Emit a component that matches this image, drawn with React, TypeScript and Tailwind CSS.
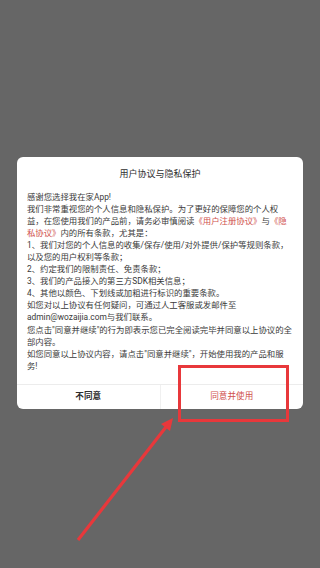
import React from 'react';

type Seg = { t: string; red?: boolean };

const lines: Seg[][] = [
  [{ t: '感谢您选择我在家App!' }],
  [{ t: '我们非常重视您的个人信息和隐私保护。为了更好的保障您的个人权' }],
  [
    { t: '益，在您使用我们的产品前，请务必审慎阅读' },
    { t: '《用户注册协议》', red: true },
    { t: '与' },
    { t: '《隐', red: true },
  ],
  [{ t: '私协议》', red: true }, { t: '内的所有条款，尤其是：' }],
  [{ t: '1、我们对您的个人信息的收集/保存/使用/对外提供/保护等规则条款，' }],
  [{ t: '以及您的用户权利等条款；' }],
  [{ t: '2、约定我们的限制责任、免责条款；' }],
  [{ t: '3、我们的产品接入的第三方SDK相关信息；' }],
  [{ t: '4、其他以颜色、下划线或加粗进行标识的重要条款。' }],
  [{ t: '如您对以上协议有任何疑问，可通过人工客服或发邮件至' }],
  [{ t: 'admin@wozaijia.com与我们联系。' }],
  [{ t: '您点击"同意并继续"的行为即表示您已完全阅读完毕并同意以上协议的全' }],
  [{ t: '部内容。' }],
  [{ t: '如您同意以上协议内容，请点击"同意并继续"，开始使用我的产品和服' }],
  [{ t: '务!' }],
];

export default function App() {
  return (
    <div
      className="relative w-[320px] h-[568px] overflow-hidden bg-[#666666] pt-[157px] px-[17px]"
      style={{ fontFamily: 'Roboto, "Noto Sans CJK SC", sans-serif' }}
    >
      {/* Dialog */}
      <div className="bg-white rounded-[6px] flex flex-col">
        <div className="pt-[11px] text-center text-[9px] leading-[12px] text-[#2e2e2e]">
          用户协议与隐私保护
        </div>

        <div className="mt-[10.5px] px-[10px] text-[8.4px] leading-[12.1px] text-[#3a3a3a]">
          {lines.map((line, i) => (
            <div key={i} className="whitespace-nowrap">
              {line.map((s, j) => (
                <span key={j} className={s.red ? 'text-[#d0514d]' : ''}>
                  {s.t}
                </span>
              ))}
            </div>
          ))}
        </div>

        {/* Buttons */}
        <div className="mt-[12px] flex h-[25px] border-t border-[#ececec]">
          <button className="flex-1 flex items-center justify-center text-[8.6px] font-bold text-[#2e2e2e]">
            不同意
          </button>
          <div className="w-px bg-[#f0f0f0]" />
          <button className="flex-1 flex items-center justify-center text-[8.6px] text-[#d0514d]">
            同意并使用
          </button>
        </div>
      </div>

      {/* Highlight box */}
      <div className="absolute left-[178px] top-[365px] w-[111px] h-[57px] border-[3px] border-[#e8383b]" />

      {/* Arrow */}
      <svg className="absolute left-0 top-0" width="320" height="568" viewBox="0 0 320 568">
        <line x1="78" y1="540" x2="166" y2="427" stroke="#e8383b" strokeWidth="3.2" />
        <polygon points="173,418 170,431 161,424" fill="#e8383b" />
      </svg>
    </div>
  );
}
